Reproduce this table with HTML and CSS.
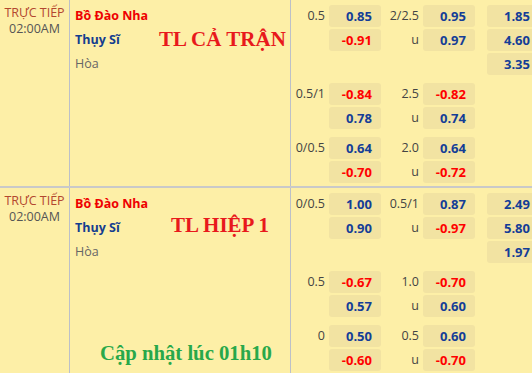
FILE: index.html
```html
<!DOCTYPE html>
<html>
<head>
<meta charset="utf-8">
<link rel="stylesheet" href="styles.css">
</head>
<body>
<div class="board">
  <div class="match">
    <div class="time"><div class="live">TRỰC TIẾP</div><div class="clock">02:00AM</div></div>
    <div class="teams">
      <div class="team home">Bồ Đào Nha</div>
      <div class="team away">Thụy Sĩ</div>
      <div class="team draw">Hòa</div>
      <div class="note note-red note-ft">TL CẢ TRẬN</div>
    </div>
    <div class="odds">
      <div class="group">
        <div class="line"><span class="lbl">0.5</span><span class="box blue">0.85</span><span class="lbl lbl2">2/2.5</span><span class="box blue">0.95</span><span class="box box3 blue">1.85</span></div>
        <div class="line"><span class="lbl"></span><span class="box red">-0.91</span><span class="lbl lbl2">u</span><span class="box blue">0.97</span><span class="box box3 blue">4.60</span></div>
        <div class="line"><span class="lbl"></span><span class="gap-box"></span><span class="lbl lbl2"></span><span class="gap-box"></span><span class="box box3 blue">3.35</span></div>
      </div>
      <div class="group">
        <div class="line"><span class="lbl">0.5/1</span><span class="box red">-0.84</span><span class="lbl lbl2">2.5</span><span class="box red">-0.82</span></div>
        <div class="line"><span class="lbl"></span><span class="box blue">0.78</span><span class="lbl lbl2">u</span><span class="box blue">0.74</span></div>
      </div>
      <div class="group">
        <div class="line"><span class="lbl">0/0.5</span><span class="box blue">0.64</span><span class="lbl lbl2">2.0</span><span class="box blue">0.64</span></div>
        <div class="line"><span class="lbl"></span><span class="box red">-0.70</span><span class="lbl lbl2">u</span><span class="box red">-0.72</span></div>
      </div>
    </div>
  </div>
  <div class="match">
    <div class="time"><div class="live">TRỰC TIẾP</div><div class="clock">02:00AM</div></div>
    <div class="teams">
      <div class="team home">Bồ Đào Nha</div>
      <div class="team away">Thụy Sĩ</div>
      <div class="team draw">Hòa</div>
      <div class="note note-red note-h1">TL HIỆP 1</div>
      <div class="note note-green">Cập nhật lúc 01h10</div>
    </div>
    <div class="odds">
      <div class="group">
        <div class="line"><span class="lbl">0/0.5</span><span class="box blue">1.00</span><span class="lbl lbl2">0.5/1</span><span class="box blue">0.87</span><span class="box box3 blue">2.49</span></div>
        <div class="line"><span class="lbl"></span><span class="box blue">0.90</span><span class="lbl lbl2">u</span><span class="box red">-0.97</span><span class="box box3 blue">5.80</span></div>
        <div class="line"><span class="lbl"></span><span class="gap-box"></span><span class="lbl lbl2"></span><span class="gap-box"></span><span class="box box3 blue">1.97</span></div>
      </div>
      <div class="group">
        <div class="line"><span class="lbl">0.5</span><span class="box red">-0.67</span><span class="lbl lbl2">1.0</span><span class="box red">-0.70</span></div>
        <div class="line"><span class="lbl"></span><span class="box blue">0.57</span><span class="lbl lbl2">u</span><span class="box blue">0.60</span></div>
      </div>
      <div class="group">
        <div class="line"><span class="lbl">0</span><span class="box blue">0.50</span><span class="lbl lbl2">0.5</span><span class="box blue">0.60</span></div>
        <div class="line"><span class="lbl"></span><span class="box red">-0.60</span><span class="lbl lbl2">u</span><span class="box red">-0.70</span></div>
      </div>
    </div>
  </div>
</div>
</body>
</html>
```

FILE: styles.css
```css
html, body {
  margin: 0;
  padding: 0;
  background: #fdefa7;
  overflow: hidden;
}
body {
  width: 532px;
  height: 373px;
  font-family: "Open Sans", "Noto Sans", sans-serif;
  font-size: 12.5px;
  color: #444;
}
.board {
  width: 532px;
  overflow: hidden;
}
.match {
  display: grid;
  grid-template-columns: 70px 221px 241px;
  border-bottom: 2px solid #c9c9c9;
}
.match + .match {
  border-bottom: none;
}
.time {
  border-right: 1px solid #bcc0c8;
  text-align: center;
  padding-top: 5px;
  line-height: 16px;
}
.live {
  color: #b3472f;
}
.clock {
  color: #555;
}
.teams {
  position: relative;
  border-right: 1px solid #bcc0c8;
  padding: 5px 0 0 5px;
}
.team {
  height: 24px;
  line-height: 22px;
}
.home {
  color: #ee0000;
  font-weight: 700;
}
.away {
  color: #143d8f;
  font-weight: 700;
}
.draw {
  color: #666;
}
.note {
  position: absolute;
  font-family: "Liberation Serif", "Times New Roman", serif;
  font-weight: 700;
  font-size: 21px;
  line-height: 21px;
  white-space: nowrap;
}
.note-red {
  color: #e8191c;
}
.note-ft {
  left: 89px;
  top: 29px;
}
.note-h1 {
  left: 101px;
  top: 27px;
}
.note-green {
  color: #28a84a;
  left: 30px;
  top: 155px;
  font-size: 20.7px;
}
.odds {
  padding: 5px 0 3px 0;
  display: flex;
  flex-direction: column;
  gap: 8px;
  overflow: hidden;
}
.group {
  display: flex;
  flex-direction: column;
  gap: 2px;
}
.line {
  display: flex;
  height: 22px;
  align-items: center;
}
.lbl {
  flex: none;
  width: 34px;
  margin-right: 4px;
  text-align: right;
  color: #444;
  line-height: 22px;
}
.lbl2 {
  width: 38px;
}
.box, .gap-box {
  flex: none;
  width: 52px;
  height: 22px;
  box-sizing: border-box;
  border-radius: 3px;
  padding-right: 9px;
  text-align: right;
  line-height: 22px;
  font-weight: 700;
  font-size: 13px;
}
.box {
  background: #f2e3a2;
}
.box3 {
  margin-left: 12px;
}
.blue {
  color: #143d97;
}
.red {
  color: #ff0000;
}
```
